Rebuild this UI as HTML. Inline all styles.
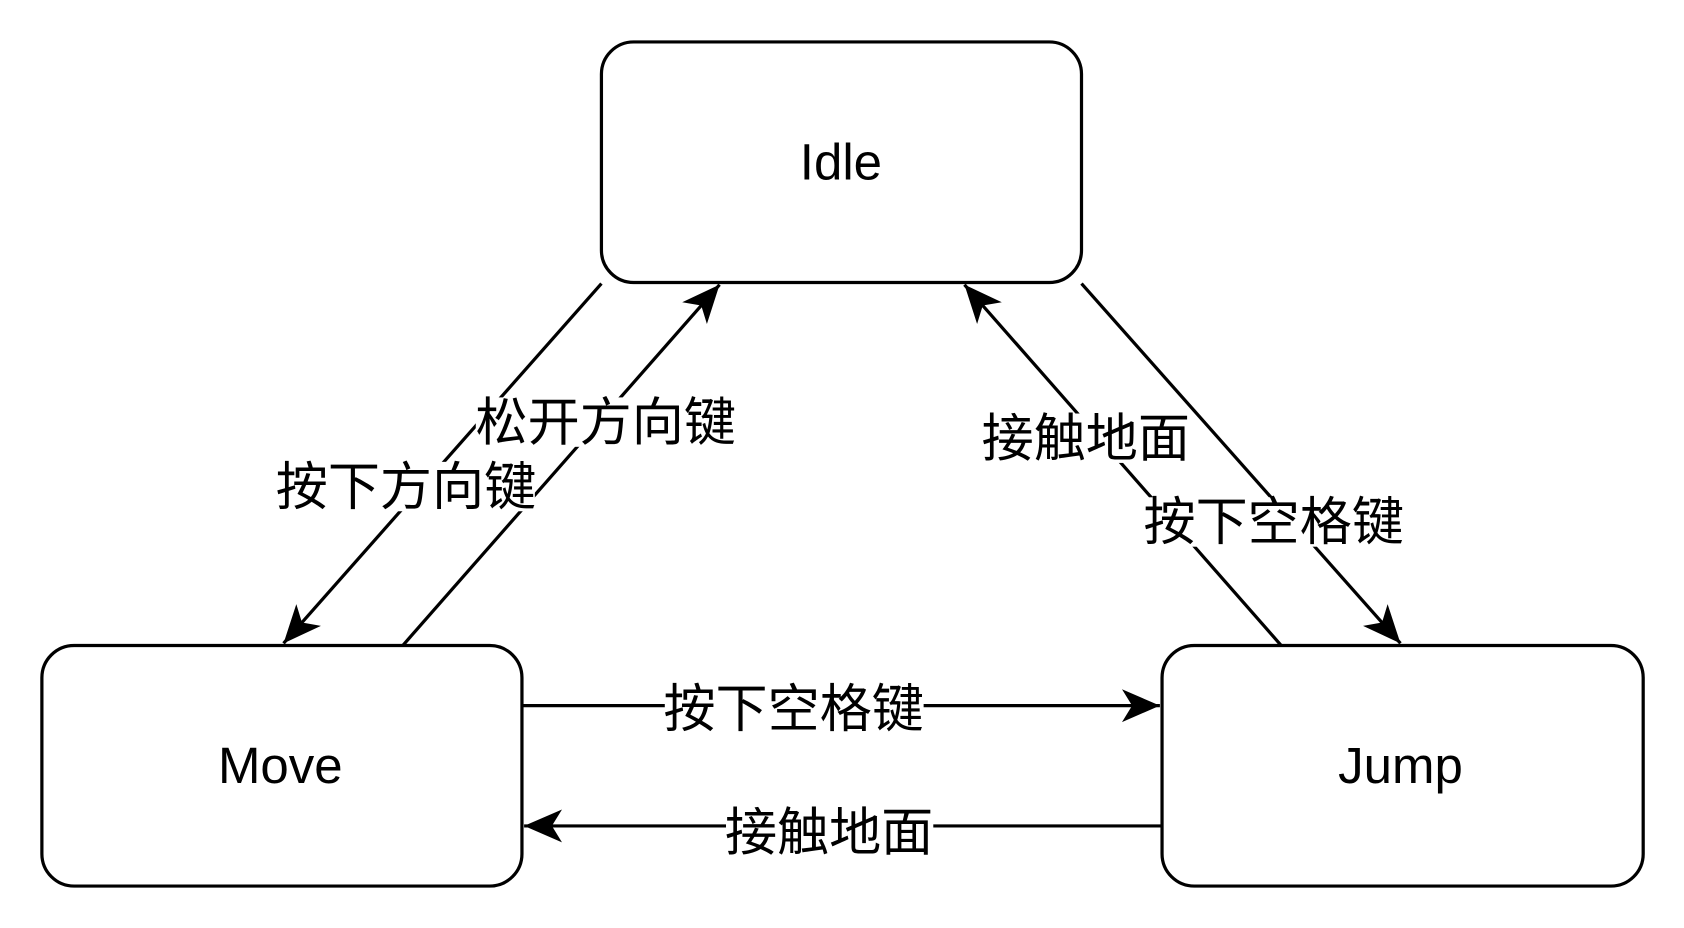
<!DOCTYPE html>
<html><head><meta charset="utf-8"><style>
html,body{margin:0;padding:0;background:#fff;}
svg{display:block;}
text{font-family:"Liberation Sans","Noto Sans CJK SC",sans-serif;fill:#000;}
</style></head><body>
<svg width="1684" height="928" viewBox="0 0 1568 864" xmlns="http://www.w3.org/2000/svg">
<defs>
<marker id="a" markerUnits="userSpaceOnUse" markerWidth="40" markerHeight="40" viewBox="-32 -16 34 32" refX="0" refY="0" orient="auto">
<path d="M0,0 L-30,-13 L-22,0 L-30,13 Z" fill="#000"/>
</marker>
</defs>
<g fill="#fff" stroke="#000" stroke-width="3">
<rect x="560" y="39" width="447" height="224" rx="30"/>
<rect x="39" y="601" width="447" height="224" rx="30"/>
<rect x="1082" y="601" width="448" height="224" rx="30"/>
</g>
<g stroke="#000" stroke-width="3" fill="none">
<line x1="560" y1="264" x2="264" y2="599" marker-end="url(#a)"/>
<line x1="375" y1="601" x2="670" y2="265" marker-end="url(#a)"/>
<line x1="1193" y1="601" x2="898" y2="265" marker-end="url(#a)"/>
<line x1="1007" y1="264" x2="1304" y2="599" marker-end="url(#a)"/>
<line x1="486" y1="657" x2="1080" y2="657" marker-end="url(#a)"/>
<line x1="1082" y1="769" x2="488" y2="769" marker-end="url(#a)"/>
</g>
<g fill="#fff">
<rect x="443" y="370" width="242" height="46"/>
<rect x="258" y="430" width="240" height="46"/>
<rect x="914" y="385" width="194" height="46"/>
<rect x="1065" y="463" width="242" height="46"/>
<rect x="619" y="637" width="241" height="46"/>
<rect x="676" y="752" width="193" height="46"/>
</g>
<g font-size="47.5" text-anchor="middle">
<text x="783" y="167">Idle</text>
<text x="261" y="729">Move</text>
<text x="1304" y="729">Jump</text>
</g>
<g font-size="48.5" text-anchor="middle">
<text x="564" y="410">松开方向键</text>
<text x="378" y="470">按下方向键</text>
<text x="1011" y="425">接触地面</text>
<text x="1186" y="503">按下空格键</text>
<text x="739" y="677">按下空格键</text>
<text x="772" y="792">接触地面</text>
</g>
</svg>
</body></html>
